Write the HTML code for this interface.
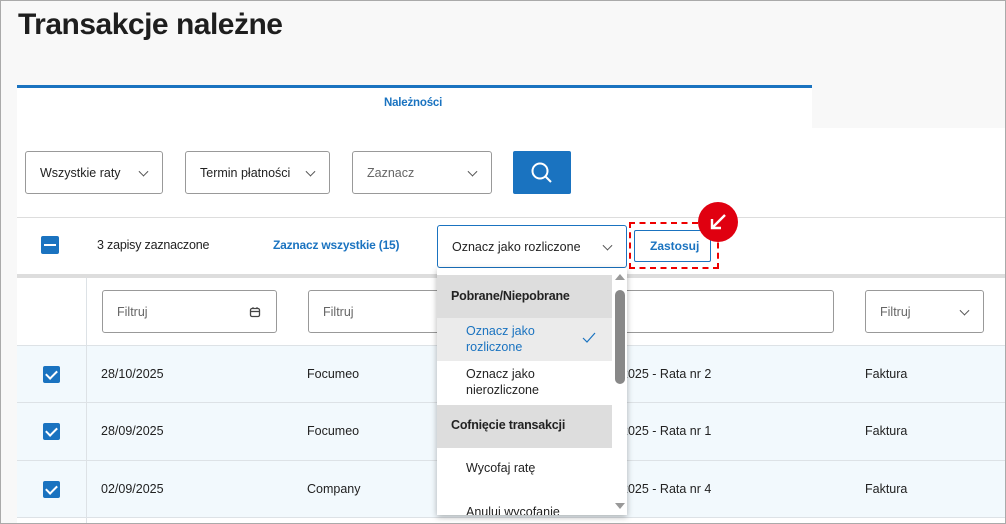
<!DOCTYPE html>
<html><head><meta charset="utf-8"><style>
*{box-sizing:border-box;margin:0;padding:0}
body{width:1006px;height:524px;overflow:hidden;background:#f8f8f8;font-family:"Liberation Sans",sans-serif;position:relative;color:#222}
.a{position:absolute}
.frame{position:absolute;left:0;top:0;width:1006px;height:524px;border:1px solid #aaa;pointer-events:none;z-index:50}
.box{position:absolute;border:1px solid #999;border-radius:3px;background:#fff;font-size:12.5px;display:flex;align-items:center;padding-left:14px}
.chev{position:absolute;right:15px;top:50%;width:7px;height:7px;border-right:1.2px solid #555;border-bottom:1.2px solid #555;transform:translateY(-70%) rotate(45deg)}
.cb{position:absolute;left:43px;width:17px;height:17px;background:#1a73c0;border-radius:2px}
.cb::after{content:"";position:absolute;left:5px;top:2px;width:5px;height:9px;border-right:2px solid #fff;border-bottom:2px solid #fff;transform:rotate(45deg)}
.row{position:absolute;left:17px;width:989px;background:#f2f9fd;border-top:1px solid #dde2e6}
.t{position:absolute;font-size:12.5px;color:#222}
</style></head><body>
<div class="a" style="left:18px;top:8px;font-size:30px;font-weight:bold;color:#1e1e1e;letter-spacing:-0.5px">Transakcje należne</div>
<div class="a" style="left:17px;top:85px;width:795px;height:43px;background:#fff;border-top:3px solid #1a73c0"></div>
<div class="a" style="left:384px;top:97px;font-size:11.5px;font-weight:bold;color:#1a73c0;letter-spacing:-0.2px">Należności</div>
<div class="a" style="left:17px;top:128px;width:989px;height:396px;background:#fff"></div>
<div class="box" style="left:25px;top:151px;width:138px;height:43px">Wszystkie raty<span class="chev"></span></div>
<div class="box" style="left:185px;top:151px;width:145px;height:43px">Termin płatności<span class="chev"></span></div>
<div class="box" style="left:352px;top:151px;width:140px;height:43px;color:#666">Zaznacz<span class="chev"></span></div>
<div class="a" style="left:513px;top:151px;width:58px;height:43px;background:#1a73c0;border-radius:2px">
<svg width="58" height="43"><circle cx="27" cy="20" r="7.5" fill="none" stroke="#fff" stroke-width="2"/><line x1="32.5" y1="25.5" x2="38" y2="31" stroke="#fff" stroke-width="2"/></svg></div>
<div class="a" style="left:17px;top:217px;width:989px;height:1px;background:#ddd"></div>
<div class="a" style="left:41px;top:236px;width:18px;height:18px;background:#1a73c0;border-radius:2px"><div style="position:absolute;left:3px;top:8px;width:12px;height:2px;background:#fff"></div></div>
<div class="t" style="left:97px;top:238px;letter-spacing:-0.2px">3 zapisy zaznaczone</div>
<div class="t" style="left:273px;top:238px;color:#1a73c0;font-weight:bold;font-size:12px;letter-spacing:-0.2px">Zaznacz wszystkie (15)</div>
<div class="box" style="left:437px;top:225px;width:190px;height:43px;border-color:#1a73c0">Oznacz jako rozliczone<span class="chev"></span></div>
<div class="box" style="left:634px;top:230px;width:77px;height:32px;border-color:#1a73c0;border-radius:2px;color:#1a73c0;font-weight:bold;padding-left:15px;font-size:12px">Zastosuj</div>
<div class="a" style="left:629px;top:222px;width:90px;height:47px;border:2px dashed #e00"></div>
<div class="a" style="left:698px;top:202px;width:40px;height:40px;border-radius:50%;background:#e00010">
<svg width="40" height="40"><path d="M27 13 L14 26 M14 17 L14 26 L23 26" fill="none" stroke="#fff" stroke-width="2.4"/></svg></div>
<div class="a" style="left:17px;top:274px;width:989px;height:4px;background:#ddd"></div>
<div class="a" style="left:86px;top:278px;width:1px;height:246px;background:#dde2e6"></div>
<div class="box" style="left:102px;top:290px;width:175px;height:43px;color:#666">Filtruj
<svg class="a" style="left:146px;top:15px" width="12" height="12"><rect x="1.5" y="2.5" width="9" height="8" rx="1.5" fill="none" stroke="#444" stroke-width="1.3"/><line x1="1.5" y1="5.5" x2="10.5" y2="5.5" stroke="#444" stroke-width="1.3"/><line x1="4" y1="1" x2="4" y2="3" stroke="#444"/><line x1="8" y1="1" x2="8" y2="3" stroke="#444"/></svg></div>
<div class="box" style="left:308px;top:290px;width:526px;height:43px;color:#666">Filtruj</div>
<div class="box" style="left:865px;top:290px;width:119px;height:43px;color:#666">Filtruj<span class="chev"></span></div>
<div class="row" style="top:345px;height:58px"></div>
<div class="row" style="top:402px;height:58px"></div>
<div class="row" style="top:460px;height:58px"></div>
<div class="row" style="top:517px;height:7px;background:#fff"></div>
<div class="a" style="left:86px;top:345px;width:1px;height:179px;background:#dde2e6"></div>
<div class="cb" style="top:366px"></div><div class="cb" style="top:423px"></div><div class="cb" style="top:481px"></div>
<div class="t" style="left:101px;top:367px">28/10/2025</div><div class="t" style="left:307px;top:367px">Focumeo</div><div class="t" style="left:621px;top:367px">2025 - Rata nr 2</div><div class="t" style="left:865px;top:367px">Faktura</div>
<div class="t" style="left:101px;top:424px">28/09/2025</div><div class="t" style="left:307px;top:424px">Focumeo</div><div class="t" style="left:621px;top:424px">2025 - Rata nr 1</div><div class="t" style="left:865px;top:424px">Faktura</div>
<div class="t" style="left:101px;top:482px">02/09/2025</div><div class="t" style="left:307px;top:482px">Company</div><div class="t" style="left:621px;top:482px">2025 - Rata nr 4</div><div class="t" style="left:865px;top:482px">Faktura</div>
<div class="a" style="left:437px;top:268px;width:190px;height:247px;background:#fff;box-shadow:0 2px 6px rgba(0,0,0,.3);overflow:hidden;font-size:12.5px">
<div class="a" style="left:0;top:7px;width:175px;height:43px;background:#ddd;font-weight:bold;padding:14px 0 0 14px;letter-spacing:-0.2px">Pobrane/Niepobrane</div>
<div class="a" style="left:0;top:50px;width:175px;height:43px;background:#ebebeb;color:#1a73c0;padding:5px 0 0 29px;line-height:16px">Oznacz jako<br>rozliczone
<svg class="a" style="left:145px;top:14px" width="14" height="12"><path d="M1 6 L5 10 L13 1" fill="none" stroke="#1a73c0" stroke-width="1.2"/></svg></div>
<div class="a" style="left:0;top:93px;width:175px;height:43px;padding:5px 0 0 29px;line-height:16px">Oznacz jako<br>nierozliczone</div>
<div class="a" style="left:0;top:137px;width:175px;height:43px;background:#ddd;font-weight:bold;padding:13px 0 0 14px;letter-spacing:-0.2px">Cofnięcie transakcji</div>
<div class="a" style="left:29px;top:193px">Wycofaj ratę</div>
<div class="a" style="left:29px;top:237px">Anuluj wycofanie</div>
<div class="a" style="left:176px;top:0;width:14px;height:247px;background:#fff"></div>
<div class="a" style="left:178px;top:6px;width:0;height:0;border-left:5px solid transparent;border-right:5px solid transparent;border-bottom:6px solid #999"></div>
<div class="a" style="left:178px;top:235px;width:0;height:0;border-left:5px solid transparent;border-right:5px solid transparent;border-top:6px solid #999"></div>
<div class="a" style="left:178px;top:22px;width:10px;height:94px;background:#888;border-radius:5px"></div>
</div>
<div class="frame"></div>
</body></html>
